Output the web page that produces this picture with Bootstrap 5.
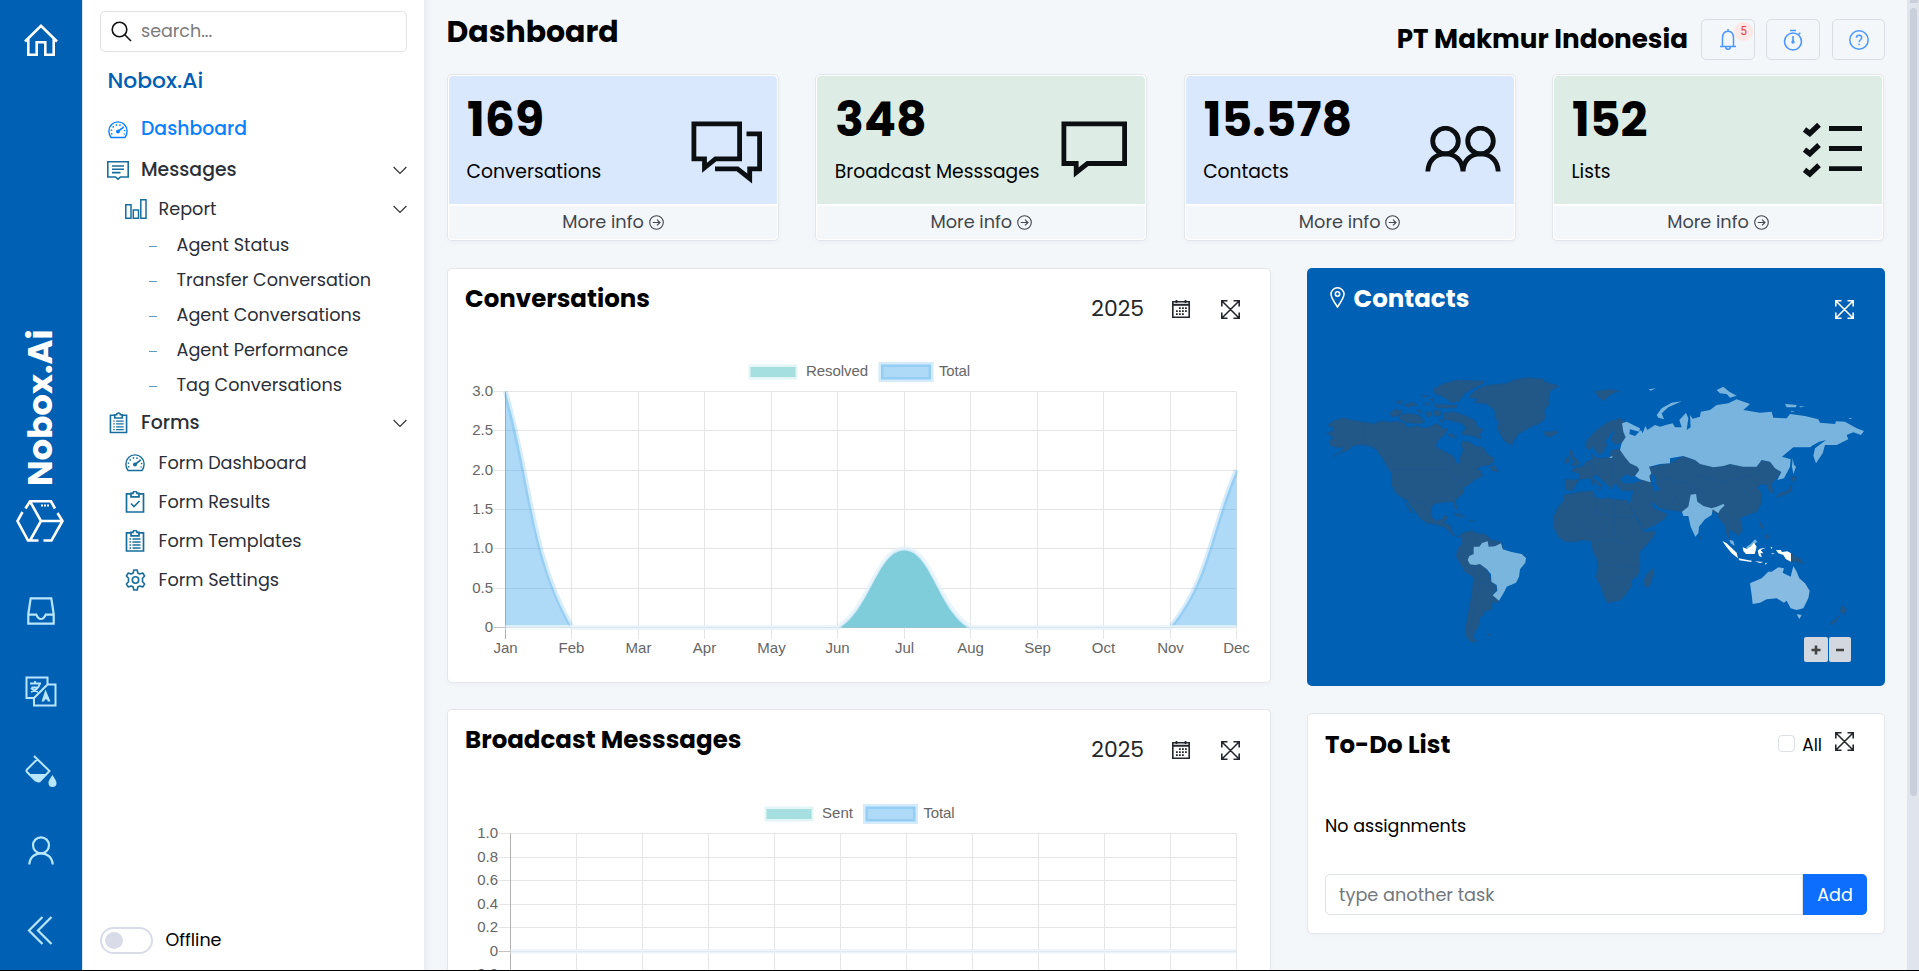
<!DOCTYPE html>
<html lang="en">
<head>
<meta charset="utf-8">
<title>Nobox.Ai - Dashboard</title>
<link href="https://cdn.jsdelivr.net/npm/bootstrap@5.3.0/dist/css/bootstrap.min.css" rel="stylesheet">
<style>
  :root { --brand: #0060b3; --soft: #f4f7fa; --line: #e3e6ea; --ico: #176d9c; }
  body { font-family: Poppins, Inter, "Open Sans", sans-serif; background: var(--soft); color: #000; height: 971px; overflow: hidden; font-size: 17.5px; }
  .shell { height: 971px; border-bottom: 1px solid #000; }
  .rail { width: 82px; background: var(--brand); color: #b9e6ff; }
  .rail svg { display: block; }
  .brand-v { writing-mode: vertical-rl; transform: rotate(180deg); color: #fff; font-weight: 700; font-size: 34px; line-height: 1; height: 154px; white-space: nowrap; margin: 276px 2px 0 0; }
  .side { width: 342px; background: #fff; border-left: 1px solid #dfe6ee; padding: 11px 17px 0 17px; }
  .finder { height: 41px; border: 1px solid #e0e2e5; border-radius: 5px; padding-left: 10px; color: #7b7b7b; width: 307px; }
  .side-title { color: var(--brand); font-weight: 500; font-size: 21.9px; line-height: 30px; margin: 14px 0 13.5px 7.5px; }
  .menu { color: #2b2f38; width: 307px; }
  .menu li { height: 39px; display: flex; align-items: center; font-size: 17.65px; }
  .menu .top { height: 41px; font-weight: 500; font-size: 18.85px; }
  .menu .leaf { height: 35px; padding-top: 1px; }
  .menu svg.i { color: var(--ico); flex: none; }
  .menu .top .ib { width: 41px; padding-left: 7px; }
  .menu .sub .ib { width: 58.5px; padding-left: 25px; }
  .menu .leaf .ib { width: 76.5px; padding-left: 49px; }
  .menu .ib { flex: none; display: flex; }
  .dash { width: 8px; height: 1px; background: #5c9cc0; margin-top: 2px; }
  .toggle { width: 53px; height: 27px; border: 2px solid #d9dce8; border-radius: 14px; padding: 3px; }
  .knob { width: 18px; height: 17px; border-radius: 50%; background: #d9dce8; }
  .main { background: linear-gradient(90deg, #e9edf3 0, #eff3f7 4px, var(--soft) 8px); padding-left: 23px; padding-right: 22px; }
  .page-title { font-weight: 700; font-size: 30px; line-height: 36px; margin: 14px 0 0 -.5px; }
  .org { font-weight: 700; font-size: 26.2px; line-height: 32px; }
  .hbtn { width: 54px; height: 41px; border: 1px solid #d8dde4; border-radius: 5px; color: #4c97fb; }
  .alert-dot { position: absolute; right: 1px; top: 2px; width: 19px; height: 19px; border-radius: 50%; background: #fde8e8; color: #e8413e; font: 12px/19px Roboto, sans-serif; text-align: center; }
  .stats { display: grid; grid-template-columns: repeat(4, 332px); justify-content: space-between; margin: 14px 1px 0 0; }
  .stat { height: 167px; background: #fff; border: 1px solid var(--line); border-radius: 5px; padding: 1px; box-shadow: 0 2px 4px rgba(40,60,90,.03); }
  .stat-top { height: 128px; border-radius: 4px 4px 0 0; padding: 0 0 0 18px; }
  .bl { background: #dae8fe; } .gr { background: #ddece4; }
  .num { font-weight: 700; font-size: 47.3px; line-height: 56px; padding-top: 16px; }
  .cap { font-size: 18.7px; line-height: 28px; margin-top: 10px; white-space: nowrap; margin-left: -.5px; }
  .more { margin-top: 2px; height: 33px; background: var(--soft); border-radius: 0 0 4px 4px; color: #42464d; font-size: 17.7px; }
  .more svg { margin-left: 5px; }
  .stat svg.big { color: #0c0f12; flex: none; }
  .cols { margin-top: 27px; display: grid; grid-template-columns: 824px 578px; justify-content: space-between; align-items: start; }
  .panel { background: #fff; border: 1px solid var(--line); border-radius: 5px; box-shadow: 0 2px 4px rgba(40,60,90,.03); }
  .panel-head { height: 71px; padding: 14px 30px 0 17px; }
  .h-t { font-weight: 700; font-size: 24.5px; line-height: 32px; margin: 0; }
  .yr { font-size: 21.9px; line-height: 32px; color: #24272c; margin-top: 10px; }
  .head-ico { margin-top: 17px; color: #24272c; }
  svg text { font-family: "Liberation Sans", Arial, sans-serif; font-size: 15px; fill: #666; }
  .geo { background: var(--brand); border-radius: 5px; height: 418px; color: #fff; position: relative; overflow: hidden; }
  .geo-head { height: 82px; padding: 15px 31px 0 23px; }
  .zoomer { position: absolute; right: 34px; bottom: 24px; display: flex; gap: 1px; }
  .zoomer span { width: 24px; height: 25px; background: #d3d7e0; border-radius: 2px; color: #444; display: flex; align-items: center; justify-content: center; }
  .zoomer span + span { width: 22px; }
  .todo { height: 221px; margin-top: 27px; padding: 15px 17px 0; }
  .chk { width: 17px; height: 17px; border: 1px solid #dcdfe3; border-radius: 4px; }
  .task { height: 41px; border: 1px solid #dee2e6; border-radius: 5px 0 0 5px; color: #72777d; padding: 1px 0 0 13px; font-size: 17.7px; }
  .add { width: 64px; height: 41px; background: #0d6efd; color: #fff; border-radius: 0 5px 5px 0; padding-top: 1px; }
  .sbar { width: 12px; background: #e0e4ec; padding: 8px 2px 0 3px; position: relative; }
  .sbar::before { content: ""; position: absolute; left: 3px; top: 0; width: 8px; height: 3px; background: #c9cfdb; }
  .thumb { height: 788px; background: #c9cfdb; border-radius: 4px; }
</style>
</head>
<body>
<svg width="0" height="0" class="position-absolute">
  <defs>
    <symbol id="gauge" viewBox="0 0 20 18"><g fill="none" stroke="currentColor"><path stroke-width="1.400" d="M3 16.500C1.600 14.700.9 12.600.9 10A9.100 9.100 0 0 1 19.100 10C19.100 12.600 18.400 14.700 17 16.500Z"/><path stroke-width="1.500" stroke-dasharray="1.500 2.200" d="M4 13.500A6.700 6.700 0 1 1 16 13.500"/><path stroke-width="1.700" d="M9.500 10.800 15 6.600"/></g><circle cx="10" cy="10.400" r="2" fill="currentColor"/></symbol>
    <symbol id="clip" viewBox="0 0 20 22"><g fill="none" stroke="currentColor" stroke-width="1.700"><path d="M1.500 2.800H18.500V21H1.500Z"/><path fill="#fff" d="M6 2.300H8A2 1.800 0 0 1 12 2.300H14V5.800H6Z"/></g></symbol>
    <symbol id="lines" viewBox="0 0 20 22"><path stroke="currentColor" stroke-width="1.300" d="M4.500 9h1.500M7.500 9h8M4.500 12h1.500M7.500 12h8M4.500 15h1.500M7.500 15h8M4.500 18h1.500M7.500 18h8"/></symbol>
    <symbol id="down" viewBox="0 0 14 9"><path d="M.6 1 7 7.400 13.400 1" fill="none" stroke="#333" stroke-width="1.200"/></symbol>
    <symbol id="cal" viewBox="0 0 18 18"><g fill="none" stroke="currentColor"><path stroke-width="1.600" d="M.8 1.700H17.200V17.200H.8Z"/><path stroke-width="2" d="M1 4.800H17"/><path stroke-width="1.800" d="M4.500 0V3M13.500 0V3"/><path stroke-width="1.800" stroke-dasharray="1.800 1.200" d="M7 8.200H15M4 11.200H15M4 14.200H12"/></g></symbol>
    <symbol id="expand" viewBox="0 0 19 19"><path d="M1.500 1.500 17.500 17.500M17.500 1.500 1.500 17.500M.8 6.500V.8H6.500M12.500.8H18.200V6.500M18.200 12.500V18.200H12.500M6.500 18.200H.8V12.500" fill="none" stroke="currentColor" stroke-width="1.600"/></symbol>
    <symbol id="go" viewBox="0 0 15 15"><g fill="none" stroke="currentColor" stroke-width="1.100"><circle cx="7.500" cy="7.500" r="6.800"/><path d="M3.800 7.500H11M8 4.600 11 7.500 8 10.400"/></g></symbol>
  </defs>
</svg>

<div class="shell d-flex">
  <aside class="rail d-flex flex-column align-items-center flex-shrink-0">
    <svg style="margin-top:24px" width="34" height="32" viewBox="0 0 34 32" fill="none" stroke="#fff" stroke-width="2.600"><path d="M1 17.500 17 1.900 33 17.500M4.300 15V30.700H12.700V18.300H21.300V30.700H29.700V15"/></svg>
    <div class="brand-v">Nobox.Ai</div>
    <svg style="margin-top:14px;margin-left:-2px" width="48" height="42" viewBox="0 0 48 42" fill="none" stroke="#fff" stroke-width="2.600"><path d="M6.500 12 1.500 21 12 40.500H22.500M14 1.300 25 21 14 40.500M9.500 8.500 14 1.300H35L39 8.500M41.500 13 46.500 21 35.500 40.500H27.500M25 21H46.500"/><path stroke-dasharray="2 1" stroke-width="2" d="M25 5.500H34"/></svg>
    <svg style="margin-top:55px" width="28" height="28" viewBox="0 0 28 28" fill="none" stroke="currentColor" stroke-width="2.200"><path d="M1.300 17 3.700 1.300H24.300L26.700 17V26.700H1.300ZM1.500 17.600H9.300Q11 22 14 22T18.700 17.600H26.500"/></svg>
    <svg style="margin-top:51px" width="32" height="31" viewBox="0 0 32 31" fill="none" stroke="currentColor" stroke-width="2"><path d="M22.500 8V1.500H1.500V22H8.500M22.500 8.500H30.500V29.500H9V22L22.500 8.500"/><path stroke-width="1.800" d="M5 7.500H16M10 5V8M6.500 11.500H13M15 7.500Q13 14 6 16M6 12Q9 15 13 16"/><path d="M20.500 13.500 16.500 25.500H19L20 23.500H22L22.800 25.500H25.500Z" fill="currentColor" stroke="none"/></svg>
    <svg style="margin-top:48px" width="32" height="32" viewBox="0 0 32 32" fill="none" stroke="currentColor" stroke-width="2"><path d="M9 1 24.500 16 15 26Q13 27 10.500 25.500L2 17Q1 15.500 2 14.500L12 4.500"/><path d="M4 19H21.500L15 26Q13 27.500 11 26Z" fill="currentColor" stroke="none"/><path d="M27.500 20C24.500 24.500 23.500 26 23.500 28A4 4 0 0 0 31.500 28C31.500 26 30 24 27.500 20Z" fill="currentColor" stroke="none"/></svg>
    <svg style="margin-top:49px" width="28" height="29" viewBox="0 0 28 29" fill="none" stroke="currentColor" stroke-width="2.200"><circle cx="14" cy="9.300" r="8"/><path d="M2.300 28.500C2.800 21 8 17.300 14 17.300S25.200 21 25.700 28.500"/></svg>
    <svg style="margin-top:51px;margin-left:-3px" width="26" height="29" viewBox="0 0 26 29" fill="none" stroke="currentColor" stroke-width="2.200"><path d="M15.500 1 2 14.500 15.500 28M24.500 1 11 14.500 24.500 28"/></svg>
  </aside>

  <nav class="side d-flex flex-column flex-shrink-0">
    <div class="finder d-flex align-items-center flex-shrink-0">
      <svg width="21" height="21" viewBox="0 0 21 21" fill="none" stroke="#111" stroke-width="1.600"><circle cx="8.500" cy="8.500" r="7.300"/><path d="M13.800 13.800 20 20"/></svg>
      <span style="margin-left:9px">search...</span>
    </div>
    <div class="side-title">Nobox.Ai</div>
    <ul class="menu list-unstyled m-0">
      <li class="top" style="height:40px;color:#0a80ff"><span class="ib" style="padding-left:8px"><svg width="20" height="18"><use href="#gauge"/></svg></span>Dashboard</li>
      <li class="top"><span class="ib"><svg class="i" width="22" height="19" viewBox="0 0 22 19" fill="none" stroke="currentColor" stroke-width="1.600"><path d="M.8.8H21.200V16H13.500L11 18.200 8.500 16H.8ZM5 5H17M5 8.300H17M5 11.600H13.500"/></svg></span>Messages<svg class="ms-auto" width="14" height="9"><use href="#down"/></svg></li>
      <li class="sub" style="height:37px"><span class="ib"><svg class="i" width="22" height="20" viewBox="0 0 22 20" fill="none" stroke="currentColor" stroke-width="1.500"><path d="M.8 5.700H6V19.200H.8ZM8.300 11H13.500V19.200H8.300ZM15.800.8H21V19.200H15.800Z"/></svg></span>Report<svg class="ms-auto" width="14" height="9"><use href="#down"/></svg></li>
      <li class="leaf"><span class="ib"><i class="dash"></i></span>Agent Status</li>
      <li class="leaf"><span class="ib"><i class="dash"></i></span>Transfer Conversation</li>
      <li class="leaf"><span class="ib"><i class="dash"></i></span>Agent Conversations</li>
      <li class="leaf"><span class="ib"><i class="dash"></i></span>Agent Performance</li>
      <li class="leaf"><span class="ib"><i class="dash"></i></span>Tag Conversations</li>
      <li class="top"><span class="ib" style="padding-left:9px"><svg class="i" width="19" height="22"><use href="#clip"/><use href="#lines"/></svg></span>Forms<svg class="ms-auto" width="14" height="9"><use href="#down"/></svg></li>
      <li class="sub"><span class="ib"><svg class="i" width="20" height="18"><use href="#gauge"/></svg></span>Form Dashboard</li>
      <li class="sub"><span class="ib"><svg class="i" width="20" height="22"><use href="#clip"/><path d="M6 12.500 9 15.500 14.500 10" fill="none" stroke="currentColor" stroke-width="1.600"/></svg></span>Form Results</li>
      <li class="sub"><span class="ib"><svg class="i" width="20" height="22"><use href="#clip"/><use href="#lines"/></svg></span>Form Templates</li>
      <li class="sub"><span class="ib"><svg class="i" width="21" height="22" viewBox="0 0 21 22" fill="none" stroke="currentColor" stroke-width="1.600" stroke-linejoin="round"><path d="M8.800 1H12.200L12.800 4 14.800 5 17.700 4 19.600 7 17.500 9.200V12.800L19.600 15 17.700 18 14.800 17 12.800 18 12.200 21H8.800L8.200 18 6.200 17 3.300 18 1.400 15 3.500 12.800V9.200L1.400 7 3.300 4 6.200 5 8.200 4Z"/><circle cx="10.500" cy="11" r="3.200"/></svg></span>Form Settings</li>
    </ul>
    <div class="mt-auto d-flex align-items-center" style="margin-bottom:16px">
      <div class="toggle"><div class="knob"></div></div><span style="margin:-1px 0 0 12.500px">Offline</span>
    </div>
  </nav>

  <main class="main flex-grow-1 overflow-hidden">
    <header class="d-flex align-items-start" style="height:60px">
      <h1 class="page-title me-auto">Dashboard</h1>
      <div class="org" style="margin:23px 13px 0 0">PT Makmur Indonesia</div>
      <div class="d-flex" style="gap:11px;margin-top:19px">
        <div class="hbtn position-relative d-flex align-items-center justify-content-center"><svg width="18" height="22" viewBox="0 0 18 22" fill="none" stroke="currentColor" stroke-width="1.500"><path d="M3.500 17V9C3.500 4.500 6 2.200 9 2.200S14.500 4.500 14.500 9V17M1 17.500H17M9 0V2.500M6.700 18A2.300 2.300 0 0 0 11.300 18"/></svg><span class="alert-dot">5</span></div>
        <div class="hbtn d-flex align-items-center justify-content-center"><svg width="20" height="22" viewBox="0 0 20 22" fill="none" stroke="currentColor" stroke-width="1.600"><circle cx="10" cy="12.500" r="8.500"/><path d="M7 1.500H13M15.500 5.500 17.300 3.700M10 7V12"/><circle cx="10" cy="13" r=".9" fill="currentColor"/></svg></div>
        <div class="hbtn d-flex align-items-center justify-content-center" style="width:53px;margin-left:1px"><svg width="20" height="20" viewBox="0 0 20 20" fill="none" stroke="currentColor" stroke-width="1.500"><circle cx="10" cy="10" r="9.200"/><path d="M7.300 7.800C7.500 4.200 12.700 4.300 12.700 7.700 12.700 9.800 10.300 9.800 10.100 12.200M10.100 13.700V15.300"/></svg></div>
      </div>
    </header>

    <section class="stats">
      <div class="stat"><div class="stat-top bl d-flex"><div class="me-auto"><div class="num">169</div><div class="cap">Conversations</div></div>
        <svg class="big" style="margin:45px 14px 0 0" width="72" height="64" viewBox="0 0 72 64" fill="none" stroke="currentColor" stroke-width="4.800"><path d="M2.900 2.900H48.600V37.900H24.500L13.500 46.800V37.900H2.900Z"/><path d="M55.500 12.900H68.600V47.900H58.700V57.500L46.500 47.900H24"/></svg></div>
        <div class="more d-flex align-items-center justify-content-center">More info<svg width="15" height="15"><use href="#go"/></svg></div></div>
      <div class="stat"><div class="stat-top gr d-flex"><div class="me-auto"><div class="num">348</div><div class="cap">Broadcast Messsages</div></div>
        <svg class="big" style="margin:45px 18px 0 0" width="66" height="60" viewBox="0 0 66 60" fill="none" stroke="currentColor" stroke-width="4.800"><path d="M2.900 2.900H63.600V42.500H26.500L15.200 51.500V42.500H2.900Z"/></svg></div>
        <div class="more d-flex align-items-center justify-content-center">More info<svg width="15" height="15"><use href="#go"/></svg></div></div>
      <div class="stat"><div class="stat-top bl d-flex"><div class="me-auto"><div class="num">15.578</div><div class="cap">Contacts</div></div>
        <svg class="big" style="margin:50px 13px 0 0" width="76" height="46" viewBox="0 0 76 46" fill="none" stroke="currentColor" stroke-width="4.800"><circle cx="20.500" cy="15" r="12.800"/><circle cx="55.500" cy="15" r="12.800"/><path d="M2.800 45.500C3.300 35 10 27.800 20.500 27.800S37.500 35 38 45.500C38.500 35 45 27.800 55.500 27.800S72.700 35 73.200 45.500"/></svg></div>
        <div class="more d-flex align-items-center justify-content-center">More info<svg width="15" height="15"><use href="#go"/></svg></div></div>
      <div class="stat"><div class="stat-top gr d-flex"><div class="me-auto"><div class="num">152</div><div class="cap">Lists</div></div>
        <svg class="big" style="margin:46px 20px 0 0" width="60" height="56" viewBox="0 0 60 56" fill="none" stroke="currentColor" stroke-width="4.800"><path d="M27 6.500H60M27 26.500H60M27 46.700H60"/><path stroke-width="5.400" d="M2.500 7.500 7.800 11.500 17 2.800M2.500 27.700 7.800 31.700 17 23M2.500 47.900 7.800 51.900 17 43.200"/></svg></div>
        <div class="more d-flex align-items-center justify-content-center">More info<svg width="15" height="15"><use href="#go"/></svg></div></div>
    </section>

    <section class="cols">
      <div class="d-flex flex-column" style="gap:26px">
        <article class="panel" style="height:415px">
          <div class="panel-head d-flex align-items-start"><h2 class="h-t me-auto">Conversations</h2><span class="yr">2025</span><svg class="head-ico" style="margin-left:28px" width="18" height="18"><use href="#cal"/></svg><svg class="head-ico" style="margin-left:31px" width="19" height="19"><use href="#expand"/></svg></div>
          <svg id="c1" class="d-block" width="822" height="340" viewBox="448 340 822 340"></svg>
        </article>
        <article class="panel overflow-hidden" style="height:261px;border-bottom:0;border-radius:5px 5px 0 0">
          <div class="panel-head d-flex align-items-start"><h2 class="h-t me-auto">Broadcast Messsages</h2><span class="yr">2025</span><svg class="head-ico" style="margin-left:28px" width="18" height="18"><use href="#cal"/></svg><svg class="head-ico" style="margin-left:31px" width="19" height="19"><use href="#expand"/></svg></div>
          <svg id="c2" class="d-block" width="822" height="189" viewBox="448 781 822 189"></svg>
        </article>
      </div>
      <div>
        <article class="geo">
          <div class="geo-head d-flex align-items-start"><svg style="margin:4px 8.500px 0 0" width="15" height="21" viewBox="0 0 15 21" fill="none" stroke="#fff" stroke-width="1.600"><path d="M7.500 20C3 13.500 1 10.500 1 7.300A6.500 6.500 0 0 1 14 7.300C14 10.500 12 13.500 7.500 20Z"/><circle cx="7.500" cy="7" r="2.200"/></svg><h2 class="h-t me-auto">Contacts</h2><svg style="margin-top:17px" width="19" height="19"><use href="#expand"/></svg></div>
          <svg class="d-block" width="578" height="336" viewBox="-9 0 1734 1008">
            <g fill="#225888" stroke="#1b5690" stroke-width="1">
              <path d="M52 225 75 211 98 204 140 213 168 217 188 221 214 213 240 216 262 214 285 220 290 232 320 228 345 234 365 228 378 220 392 228 398 236 412 236 410 246 398 260 382 272 378 290 400 303 420 312 432 320 438 338 450 343 450 320 460 300 452 284 458 272 480 277 498 290 513 288 525 300 533 315 550 322 552 335 540 345 515 348 500 358 513 362 512 372 524 376 505 384 490 392 480 402 462 412 462 430 445 442 436 452 443 480 432 470 430 455 400 457 370 463 363 480 364 500 380 513 395 508 402 497 413 498 408 512 400 520 420 524 425 538 430 552 443 560 430 557 415 542 405 532 380 524 350 518 330 505 320 490 300 466 288 446 280 446 258 430 246 408 245 370 232 350 222 332 208 312 200 300 185 290 160 285 142 285 128 288 115 300 100 305 66 320 95 303 100 292 80 293 60 285 57 272 72 264 50 250 70 242 72 234Z"/>
              <path d="M282 448 300 475 310 490 300 485 288 465ZM540 352 552 345 567 366 545 362ZM478 138 500 118 530 106 590 100 610 90 650 83 700 87 705 96 735 104 747 108 722 122 716 140 716 165 703 180 706 205 690 220 655 235 628 250 612 270 606 285 585 276 572 255 563 235 566 215 556 205 553 180 530 162 490 157 505 148 478 142Z"/>
              <path d="M370 118 395 103 440 90 522 92 522 100 490 115 465 130 445 155 425 158 400 140 375 132ZM400 190 430 185 460 195 497 212 502 230 522 240 510 250 512 268 490 258 455 254 460 240 470 235 455 220 425 212 400 208ZM265 195 300 190 325 195 345 215 330 222 290 218 268 208ZM240 190 255 178 282 182 262 198 245 200ZM255 155 280 150 270 162ZM278 165 310 156 322 166 295 170ZM330 135 355 138 345 143ZM340 158 362 160 355 167ZM360 148 372 142 372 158ZM372 162 440 166 440 174 378 173ZM345 188 362 184 366 196 355 202ZM370 182 392 180 392 196 375 200ZM385 208 402 210 396 218ZM318 180 335 180 332 190ZM412 255 425 250 440 262 420 262ZM430 490 450 492 465 502 440 498ZM478 510 495 513 480 514ZM530 852 543 852 538 857Z"/>
              <path d="M443 560 458 548 470 545 487 542 500 550 525 552 545 570 575 576 580 600 520 640 545 690 562 715 550 735 566 750 564 758 548 757 545 770 546 778 522 785 522 796 510 800 505 830 495 845 488 862 502 875 485 877 470 862 465 840 475 790 480 760 487 720 490 682 465 665 450 640 438 618 445 595 457 580 455 562Z"/>
              <path d="M698 244 720 246 738 240 741 250 722 262 706 256ZM853 124 870 122 900 118 928 122 900 135 880 153 865 140ZM780 298 790 308 788 316 800 328 811 340 800 347 783 348 792 335 780 318ZM765 325 778 320 776 338 764 342Z"/>
              <g transform="translate(810 0)">
                <path d="M20 270 50 240 85 215 120 205 133 213 140 240 145 262 128 280 105 283 92 270 100 250 106 245 95 245 85 262 75 275 82 285 70 305 58 316 48 305 38 290 28 300 18 292Z"/>
                <path d="M-45 388-5 390 0 372-28 362-10 352 10 348 18 335 38 328 35 308 45 322 60 325 88 322 95 300 128 296 150 335 215 350 270 340 310 318 345 330 400 352 450 342 530 350 545 330 570 335 604 370 590 385 575 400 580 430 568 425 560 405 545 403 530 412 545 430 545 460 530 485 495 498 480 505 488 540 475 557 460 545 450 538 447 560 462 590 440 555 435 525 420 510 412 490 390 485 340 520 320 495 305 485 265 480 240 475 225 462 210 455 225 478 240 482 262 492 255 505 225 525 190 540 180 520 165 495 148 465 155 440 160 422 125 422 115 412 112 402 98 405 95 420 82 405 50 375 35 380 60 400 68 408 60 412 30 385 0 388-10 400-22 422-45 418Z"/>
                <path d="M-48 435-20 430 0 425 40 422 45 440 65 448 85 443 100 448 140 450 152 470 165 500 180 525 192 545 225 543 222 560 195 590 178 605 180 660 170 680 155 690 152 712 140 730 122 750 100 755 82 760 75 745 60 705 48 680 55 650 50 625 38 605 35 575 12 570-15 575-45 575-65 560-80 530-80 500-65 470-48 450ZM218 655 222 670 208 710 195 712 192 690 200 672ZM638 378 650 385 640 395 632 390ZM635 400 632 425 605 437 585 445 600 430 625 420ZM356 556 365 563 358 570ZM540 515 550 530 545 540 540 528ZM555 550 568 560 560 570ZM633 610 650 622 660 625 672 642 650 635 633 635ZM785 765 800 780 790 795 780 785ZM750 820 765 808 780 795 770 812 757 824ZM35 392 40 392 40 405 36 405ZM50 418 62 416 60 422Z"/>
                <path fill="#0060b3" stroke="none" d="M120 388 140 372 152 380 165 378 185 392 160 399 130 400ZM214 372 228 380 225 398 240 418 225 425 216 405Z"/>
                <path fill="none" stroke="#13599f" d="M-40 470 10 530M45 440 50 490 105 500V450M105 500H160M0 540 60 545 110 500M40 575 90 570 150 580M60 640 120 650 175 650M80 700 120 680 150 690M100 450 105 560 140 600M210 405 260 385 330 400 380 440M340 375 430 395 500 380 540 360M265 480 290 440 330 405M440 490 450 530M30 330 50 370M90 325 100 390"/>
              </g>
              <path fill="none" stroke="#13599f" d="M166 215V283L205 300M246 357H410L430 375 436 395 470 385M290 447 340 460 365 475M500 560 490 590M490 682 495 640M545 690 510 700 495 760 480 850"/>
            </g>
            <path fill="#7ab5de" d="M473 630 478 618 491 612 491 590 508 590 516 579 533 574 536 590 555 589 573 580 578 598 605 606 635 612 648 624 646 638 630 658 627 680 618 698 590 710 583 725 567 752 548 736 562 722 560 705 544 695 543 673 530 657 510 642 495 645 480 643Z"/>
            <g transform="translate(810 0)" fill="#78b4de">
              <path d="M126 220 140 215 180 235 178 245 150 238 148 252 165 258 183 240 188 250 196 228 202 240 225 225 240 230 260 224 278 220 285 232 305 232 298 210 318 188 325 205 320 240 332 232 330 195 338 206 360 200 362 185 390 180 410 165 445 160 470 148 510 162 490 180 540 188 575 185 580 203 620 205 630 192 675 198 715 208 720 218 765 222 768 214 795 215 830 235 852 243 843 255 820 247 800 255 805 268 770 285 735 285 728 310 708 340 700 318 705 295 738 270 718 275 700 285 690 292 640 292 606 320 632 328 630 350 612 385 592 390 604 366 585 355 570 335 545 330 530 350 490 350 450 342 430 348 400 352 360 342 345 330 330 325 310 318 270 325 270 340 240 342 207 350 214 370 208 378 212 397 180 388 165 378 178 360 172 350 150 340 135 322 120 300 125 280 137 262 130 245ZM230 195 245 175 275 158 305 154 265 172 245 190 252 208 235 203ZM410 120 430 110 448 125 470 137 450 143 440 132 420 130ZM615 162 650 165 648 172 620 172ZM658 168 675 170 660 172ZM632 182 645 184 635 186ZM805 204 818 203 810 207ZM638 325 642 345 648 350 640 372 636 350ZM206 118 228 115 212 122ZM86 322 98 318 96 324Z"/>
              <path d="M332 434 348 432 352 455 370 468 395 475 410 470 430 462 434 466 420 480 415 490 398 478 395 495 375 508 357 530 355 550 346 560 332 530 325 498 310 498 306 485 325 470ZM448 570 460 572 464 588 452 580ZM498 592 512 582 525 568 532 575 520 584 505 597Z"/>
              <path fill="#88bbe2" d="M510 700 545 685 565 665 575 665 595 652 612 655 608 668 632 680 640 648 650 665 658 685 675 700 689 722 685 745 670 775 650 780 632 775 620 752 612 758 590 745 560 748 540 758 518 762 515 735ZM650 793 665 795 658 807Z"/>
              <path fill="#fff" d="M427 573 440 580 470 608 474 625 455 610 440 592ZM475 625 515 632 514 636 478 631ZM488 592 500 596 512 590 522 578 530 590 524 612 498 612 490 603ZM533 602 540 596 558 593 542 600 550 610 541 610 546 622 537 618ZM588 600 602 600 606 606 622 604 633 610 633 635 618 628 610 615 595 610ZM524 634 550 636 540 639ZM555 640 562 638 556 644ZM572 590 577 592 574 598ZM574 610 586 611 576 613Z"/>
            </g>
          </svg>
          <div class="zoomer"><span><svg width="10" height="10"><path d="M5 .5V9.500M.5 5H9.500" stroke="#444" stroke-width="2.600"/></svg></span><span><svg width="10" height="10"><path d="M1 5H9" stroke="#444" stroke-width="2.400"/></svg></span></div>
        </article>
        <article class="panel todo">
          <div class="d-flex align-items-start"><h2 class="h-t me-auto">To-Do List</h2><span class="chk" style="margin-top:6px"></span><span style="margin:3px 13px 0 7px;font-size:17px;line-height:27px">All</span><svg style="margin:3px 13px 0 0" width="19" height="19" color="#24272c"><use href="#expand"/></svg></div>
          <div style="margin-top:52px;line-height:26px">No assignments</div>
          <div class="d-flex" style="margin-top:35px"><div class="task flex-grow-1 d-flex align-items-center">type another task</div><div class="add d-flex align-items-center justify-content-center">Add</div></div>
        </article>
      </div>
    </section>
  </main>
  <div class="sbar flex-shrink-0"><div class="thumb"></div></div>
</div>

<script>
const months = ['Jan','Feb','Mar','Apr','May','Jun','Jul','Aug','Sep','Oct','Nov','Dec'];
/* Draws the axes, grid and legend of a line chart; `body` holds the plotted series. */
function chart(id, o) {
  const X = i => o.x0 + (o.x1 - o.x0) * i / 11;
  let s = '';
  o.ticks.forEach((t, i) => {
    const y = Math.floor(o.y0 + i * o.dy) + .5;
    s += `<path d="M${o.x0 - 12} ${y}H${o.x1}" stroke="${t === '0' ? '#c4c4c4' : '#e5e5e5'}"/>`;
    s += `<text x="${o.x0 - 12.5}" y="${y + 4.5}" text-anchor="end">${t}</text>`;
  });
  for (let i = 0; i < 12; i++) {
    const x = Math.floor(X(i)) + .5;
    s += `<path d="M${x} ${o.y0}V${o.bottom}" stroke="${i ? '#e5e5e5' : '#b0b0b0'}"/>`;
    if (o.labels) s += `<text x="${x}" y="${o.bottom + 13.5}" text-anchor="middle">${o.labels[i]}</text>`;
  }
  s += o.body;
  const L = o.legend, ly = o.y0 - 19.5;
  s += `<rect x="${L.a}" y="${ly - 7.5}" width="49" height="15" fill="#e3f5f5"/><rect x="${L.a + 2}" y="${ly - 5}" width="45" height="10" fill="#a6dfdf"/>`;
  s += `<text x="${L.a + 57.5}" y="${ly + 3.5}" textLength="${L.w}">${L.name}</text>`;
  s += `<rect x="${L.b + 2.5}" y="${ly - 7.5}" width="50" height="15" fill="#afdaf7" stroke="#36a2eb" stroke-opacity=".22" stroke-width="5"/>`;
  s += `<text x="${L.b + 60.5}" y="${ly + 3.5}" textLength="31">Total</text>`;
  document.getElementById(id).innerHTML = s;
}
const total = 'M505.5 391.5C532.1 485.9 530.2 553.3 572 627.5H837.7C870 608.4 877.4 548.8 904.2 548.8S938 608.4 970.7 627.5H1170C1208.3 582.2 1209.9 532.9 1236.5 470';
const solved = 'M505.5 627.5H837.7C870 608.4 877.4 548.8 904.2 548.8S938 608.4 970.7 627.5H1236.5';
chart('c1', { x0: 505.5, x1: 1236.5, y0: 391.5, dy: 39.3, bottom: 639, ticks: ['3.0','2.5','2.0','1.5','1.0','0.5','0'], labels: months,
  legend: { a: 748.5, b: 878.5, w: 62, name: 'Resolved' },
  body: `<path d="${total}V627.5H505.5Z" fill="#36a2eb" fill-opacity=".4"/><path d="${total}" fill="none" stroke="#36a2eb" stroke-opacity=".2" stroke-width="5"/>
    <path d="${solved}" fill="none" stroke="#f4fafc" stroke-opacity=".65" stroke-width="5"/><path d="M840.5 627.5C870 608.4 878.4 550.5 904.2 550.5S938 608.4 967.7 627.5Z" fill="#7fcdda"/>` });
chart('c2', { x0: 510.5, x1: 1236.5, y0: 833.5, dy: 23.55, bottom: 975, ticks: ['1.0','0.8','0.6','0.4','0.2','0','-0.2'],
  legend: { a: 764.5, b: 863, w: 31, name: 'Sent' },
  body: '<path d="M510.5 951.3H1236.5" stroke="#e9f3f9" stroke-opacity=".8" stroke-width="4.5"/>' });
</script>
<script src="https://cdn.jsdelivr.net/npm/bootstrap@5.3.0/dist/js/bootstrap.bundle.min.js"></script>
</body>
</html>
